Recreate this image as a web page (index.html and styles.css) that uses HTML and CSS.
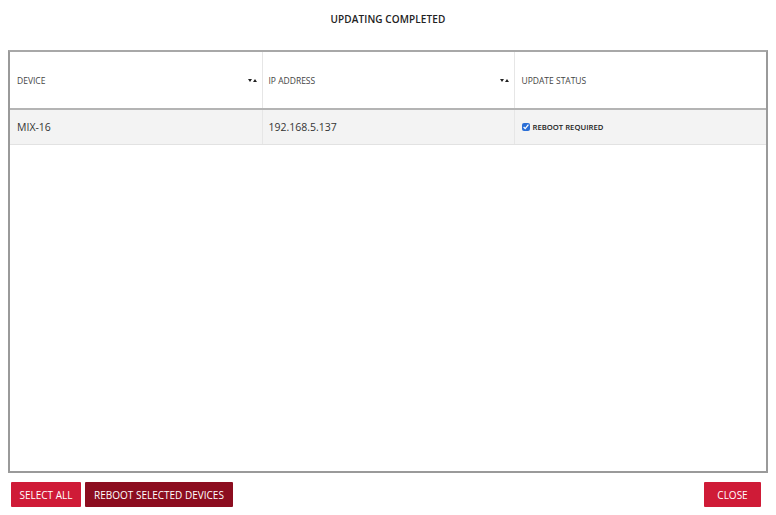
FILE: index.html
```html
<!DOCTYPE html>
<html>
<head>
<meta charset="utf-8">
<link rel="stylesheet" href="styles.css">
</head>
<body>
<div class="dialog">
  <div class="title">UPDATING COMPLETED</div>
  <div class="grid-box">
    <table class="grid">
      <thead>
        <tr>
          <th class="col-dev"><div class="th-in"><span>DEVICE</span><span class="sort"><svg width="9" height="5" viewBox="0 0 9 5"><path d="M0 1h4L2 4z" fill="#222"/><path d="M5 4h4L7 1z" fill="#222"/></svg></span></div></th>
          <th class="col-ip"><div class="th-in"><span>IP ADDRESS</span><span class="sort"><svg width="9" height="5" viewBox="0 0 9 5"><path d="M0 1h4L2 4z" fill="#222"/><path d="M5 4h4L7 1z" fill="#222"/></svg></span></div></th>
          <th class="col-st"><div class="th-in"><span>UPDATE STATUS</span></div></th>
        </tr>
      </thead>
      <tbody>
        <tr>
          <td>MIX-16</td>
          <td>192.168.5.137</td>
          <td><label class="status"><input type="checkbox" checked class="chk"><span>REBOOT REQUIRED</span></label></td>
        </tr>
      </tbody>
    </table>
  </div>
  <div class="footer">
    <button class="btn btn-red btn-sel">SELECT ALL</button>
    <button class="btn btn-dark btn-reboot">REBOOT SELECTED DEVICES</button>
    <span class="spacer"></span>
    <button class="btn btn-red btn-close">CLOSE</button>
  </div>
</div>
</body>
</html>
```
FILE: styles.css
```css
* { box-sizing: border-box; }
html, body { margin: 0; padding: 0; background: #fff; }
body { font-family: "Open Sans", "Noto Sans", sans-serif; color: #333; }
.dialog { width: 776px; height: 515px; padding: 0 8px; display: flex; flex-direction: column; }
.title { height: 38px; line-height: 38px; text-align: center; font-size: 10px; font-weight: 600; color: #222; margin-bottom: 12px; letter-spacing: 0.1px; }
.grid-box { height: 423px; border: 2px solid #9a9a9a; border-top-color: #a8a8a8; background: #fff; }
.grid { width: 100%; border-collapse: collapse; table-layout: fixed; }
.grid th { height: 57px; padding: 0; font-weight: 400; font-size: 8.5px; color: #444; text-align: left; border-right: 1px solid #e6e6e6; border-bottom: 2px solid #b4b4b4; }
.grid th:last-child { border-right: none; }
.col-dev { width: 252px; }
.col-ip { width: 252px; }
.th-in { display: flex; align-items: center; justify-content: space-between; padding: 0 5px 0 7px; }
.col-ip .th-in { padding-left: 6px; }
.sort { display: flex; align-items: center; }
.grid td { height: 35px; padding: 0 6px 0 7px; font-size: 10.5px; color: #333; background: #f3f3f3; border-right: 1px solid #e6e6e6; border-bottom: 1px solid #e2e2e2; }
.grid td:nth-child(2) { padding-left: 6px; }
.grid td:last-child { border-right: none; }
.status { display: flex; align-items: center; gap: 3px; font-size: 7.7px; font-weight: 600; color: #222; }
.chk { width: 8px; height: 8px; margin: 0; accent-color: #2b6fd6; }
.footer { display: flex; align-items: center; gap: 4px; padding: 9px 7px 0 3px; }
.spacer { flex: 1; }
.btn { height: 25px; border: none; border-radius: 1px; color: #fff; font-family: "Open Sans", "Noto Sans", sans-serif; font-size: 10px; padding: 0 8px; cursor: pointer; }
.btn-sel { padding: 0 8px; width: 70px; }
.btn-reboot { padding: 0 9px; width: 148px; }
.btn-close { padding: 0 13px; width: 57px; }
.btn-red { background: #cf1b37; }
.btn-dark { background: #8c0d1f; }
```
